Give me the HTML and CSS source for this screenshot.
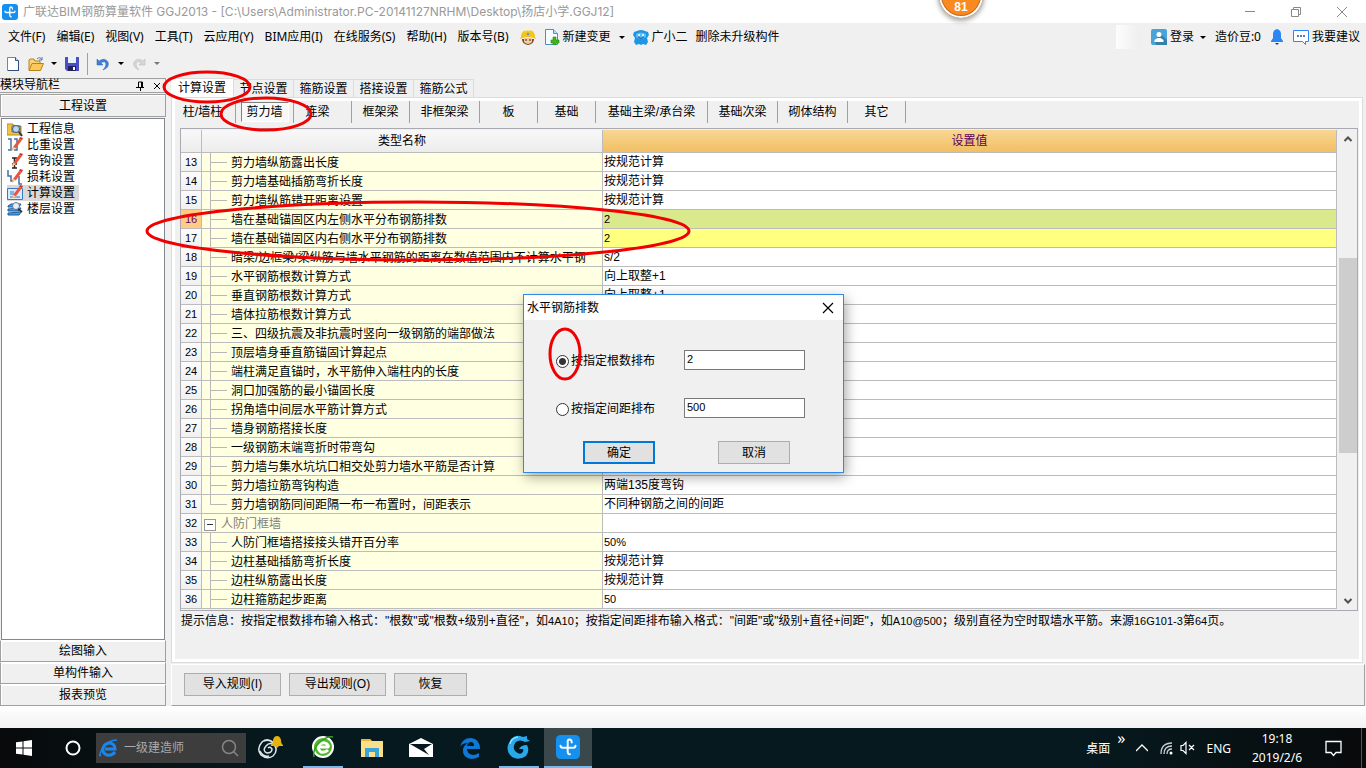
FILE: index.html
```html
<!DOCTYPE html>
<html lang="zh-CN">
<head>
<meta charset="utf-8">
<title>广联达BIM钢筋算量软件 GGJ2013</title>
<link rel="stylesheet" href="styles.css">
</head>
<body>
<svg class="defs" width="0" height="0" aria-hidden="true">
  <symbol id="pencil" viewBox="0 0 16 16"><path d="M6 10 12 2l3 1-6 8-4 2z" fill="#e8553a"/><path d="M12 2l1-2 3 1-1 2z" fill="#c33"/><path d="M6 10l3 1-4 3z" fill="#f3d3a0"/></symbol>
  <symbol id="brand" viewBox="0 0 16 16"><rect width="16" height="16" rx="3" fill="#1490f0"/><path d="M10.500 5Q10.500 3 9 3T7.800 5V11Q7.800 13 9.300 12.800M3 7.200Q3 8.500 4.500 8.500H11.500Q13 8.500 13 7.200" fill="none" stroke="#fff" stroke-width="1.300" stroke-linecap="round"/></symbol>
</svg>

<header class="titlebar">
  <svg class="i16"><use href="#brand"/></svg>
  <h1 class="title">广联达BIM钢筋算量软件 GGJ2013 - [C:\Users\Administrator.PC-20141127NRHM\Desktop\扬店小学.GGJ12]</h1>
  <div class="winbtns">
    <button aria-label="最小化"><svg width="12" height="12"><path d="M1 5.500h10" stroke="#888"/></svg></button>
    <button aria-label="还原"><svg width="12" height="12"><path d="M1.500 3.500h7v7h-7zM3.500 3V1.500h7v7H9" fill="none" stroke="#888"/></svg></button>
    <button aria-label="关闭"><svg width="12" height="12"><path d="M1 1l10 10M11 1L1 11" stroke="#888"/></svg></button>
  </div>
</header>

<nav class="menubar">
  <button>文件(F)</button><button>编辑(E)</button><button>视图(V)</button><button>工具(T)</button><button>云应用(Y)</button><button>BIM应用(I)</button><button>在线服务(S)</button><button>帮助(H)</button><button>版本号(B)</button>
  <div class="extras">
  <button aria-label="客服"><svg class="i16" viewBox="0 0 16 16"><path d="M2 10q0 5 6 6 6-1 6-6z" fill="#7a4320"/><path d="M4 9h8v4q-4 4-8 0z" fill="#f6c99a"/><path d="M6 10v2M10 10v2" stroke="#333"/><path d="M1 8Q1 1 8 1t7 7l1 2q-8-4-16 0z" fill="#f3c51e"/><path d="M5 2q3-2 5 0" stroke="#fff3a0" fill="none"/><circle cx="8" cy="5" r="1.300" fill="#5a9be0"/></svg></button>
  <button><svg class="i16" viewBox="0 0 16 16"><path d="M1.500.5h8l4 4v11h-12z" fill="#f5fbff" stroke="#4a90c8"/><path d="M9.500.5v4h4" fill="#bfe0f7" stroke="#4a90c8"/><path d="M9 8h3v3h3v3h-3v2H9v-2H7v-3h2z" fill="#3fb618" stroke="#278a0c" stroke-width=".6"/></svg>新建变更<i class="caret"></i></button>
  <button><svg class="i16" viewBox="0 0 16 16"><path d="M1 3l3-1q4-2 8 0l3 1 1 3-2 3 1 4-2 3-3-1-2 1-2-1-3 1-2-3 1-4-2-3z" fill="#1e96e8"/><path d="M3 5q5-3 10 0v3q-5 4-10 0z" fill="#5bbcf5"/><circle cx="6" cy="6" r="1" fill="#fff"/><circle cx="10" cy="6" r="1" fill="#fff"/><path d="M5 8q3 3 6 0" stroke="#0b5ca8" fill="none"/></svg>广小二</button>
  <button>删除未升级构件</button>
  </div>
  <span class="ghost"></span>
  <div class="account">
    <button><svg class="i16" viewBox="0 0 16 16"><rect width="16" height="16" rx="2" fill="#4aa3d8"/><path d="M9 4l7 7v5H5l-1-4z" fill="#367fa9"/><circle cx="8" cy="5.500" r="2.500" fill="#fff"/><path d="M3.500 13v-2l3-2h3l3 2v2z" fill="#fff"/></svg>登录<i class="caret"></i></button>
    <span>造价豆:0</span>
    <button aria-label="通知"><svg width="14" height="16" viewBox="0 0 14 16"><path d="M7 0q-4 1-4 5v4l-2 3v1h12v-1l-2-3V5q0-4-4-5z" fill="#2b86f5"/><path d="M5 14h4l-2 2z" fill="#123c8c"/></svg></button>
    <button><svg class="i16" viewBox="0 0 16 16"><path d="M.5 1.500h15v11h-3v3l-3-3h-9z" fill="#fff" stroke="#2b86f5"/><path d="M4 7h8" stroke="#1d4fa0" stroke-width="1.500" stroke-dasharray="2 1"/></svg>我要建议</button>
  </div>
</nav>

<div class="toolbar">
  <button aria-label="新建"><svg class="i16" viewBox="0 0 16 16"><path d="M2.500 1.500h8l3 3v10h-11z" fill="#fff" stroke="#6d87a8"/><path d="M10.500 1.500v3h3" fill="#cfe0f2" stroke="#2e4f7d"/><path d="M13.500 5v10M3 14.500h11" stroke="#2e4f7d"/></svg></button>
  <button aria-label="打开"><svg class="i16" viewBox="0 0 16 16"><path d="M1 14V4l1-1h4l1 2h5v3" fill="#f7d375" stroke="#b8811c"/><path d="M1 14.500L4 7.500h11.500l-3 7z" fill="#fbc95a" stroke="#b8811c"/><path d="M9 3q3-3 5 1m0-3v3h-3" fill="none" stroke="#4b7cb5"/></svg><i class="caret"></i></button>
  <button aria-label="保存"><svg class="i16" viewBox="0 0 16 16"><path d="M1 1h14v14H3l-2-2z" fill="#4a4fc4"/><path d="M4 1h8v6H4z" fill="#e8f2ff"/><path d="M4 10h8v5H4z" fill="#1e2060"/><path d="M9 11h2v3H9z" fill="#fff"/></svg></button>
  <span class="bar"></span>
  <button aria-label="撤销"><svg class="i16" viewBox="0 0 16 16"><path d="M2 3v6h6L6 7q4-3 5 1 0 3-3 6 7-3 5-8-3-5-9-1z" fill="#3f7fd8" stroke="#2a5db0" stroke-width=".5"/></svg><i class="caret"></i></button>
  <button class="dim" aria-label="恢复"><svg class="i16" viewBox="0 0 16 16"><path d="M14 3v6H8l2-2Q6 4 5 8q0 3 3 6-7-3-5-8 3-5 9-1z" fill="#d6d6d6" stroke="#bbb" stroke-width=".5"/></svg><i class="caret"></i></button>
</div>

<div class="work">
  <aside class="side">
    <div class="sidehead"><h2>模块导航栏</h2>
      <button aria-label="固定"><svg width="10" height="10"><path d="M3.500 6V1h4v5M6.500 1v5M1 6.500h8M5.500 7v3" fill="none" stroke="#000"/></svg></button>
      <button aria-label="关闭"><svg width="8" height="8"><path d="M1 1l6 6M7 1L1 7" stroke="#000"/></svg></button></div>
    <button class="nav">工程设置</button>
    <ul class="tree">
      <li><a href="#"><svg class="i16" viewBox="0 0 16 16"><path d="M0 3h6l1 2h7v9H0z" fill="#f0c544" stroke="#c08a10"/><path d="M5 5h8v6H5z" fill="#f3f7ff" stroke="#567"/><circle cx="9" cy="8" r="3.500" fill="#b7d9f7" stroke="#456"/><path d="M12 11l3 4" stroke="#333" stroke-width="2"/></svg>工程信息</a></li>
      <li><a href="#"><svg class="i16" viewBox="0 0 16 16"><path d="M1 2h3v11H1M7 2h3v11H7" fill="none" stroke="#47709f" stroke-width="1.500"/><use href="#pencil"/></svg>比重设置</a></li>
      <li><a href="#"><svg class="i16" viewBox="0 0 16 16"><path d="M5 5h5M7.500 5v10M5 15h5M5 11h5" fill="none" stroke="#222" stroke-width="1.500"/><use href="#pencil"/></svg>弯钩设置</a></li>
      <li><a href="#"><svg class="i16" viewBox="0 0 16 16"><path d="M1 1v6h3v5h3M12 7v8h3" fill="none" stroke="#47709f" stroke-width="1.500"/><use href="#pencil"/></svg>损耗设置</a></li>
      <li><a href="#" class="on"><svg class="i16" viewBox="0 0 16 16"><path d="M.5 3.500h15v11H.5z" fill="#d7eaff" stroke="#3c78c0"/><path d="M3 7h4M3 9h4M3 12h10" stroke="#3c78c0"/><use href="#pencil"/></svg>计算设置</a></li>
      <li><a href="#"><svg class="i16" viewBox="0 0 16 16"><path d="M1 5l3-2h10l-2 3H1zM1 8l13-1-2 3H1zM1 12l13-1-2 3H1z" fill="#4d9ce0" stroke="#1d5c9c"/><circle cx="9" cy="5" r="3.500" fill="#e1f0fc" stroke="#678"/><path d="M11 8l4 3" stroke="#333" stroke-width="2"/></svg>楼层设置</a></li>
    </ul>
    <button class="nav">绘图输入</button><button class="nav">单构件输入</button><button class="nav">报表预览</button>
  </aside>

  <main class="main">
    <div class="tabs"><button class="on">计算设置</button><button>节点设置</button><button>箍筋设置</button><button>搭接设置</button><button>箍筋公式</button></div>
    <section class="panel">
      <div class="subtabs"><button class="first">柱/墙柱</button><button class="on"><span>剪力墙</span></button><button class="near">连梁</button><button>框架梁</button><button class="mid">非框架梁</button><button>板</button><button>基础</button><button class="long">基础主梁/承台梁</button><button class="mid">基础次梁</button><button class="mid">砌体结构</button><button>其它</button></div>
      <div class="gridbox">
        <table>
          <colgroup><col class="cno"><col class="cname"><col></colgroup>
          <thead><tr><th></th><th>类型名称</th><th class="gold">设置值</th></tr></thead>
          <tbody>
            <tr><th>13</th><td>剪力墙纵筋露出长度</td><td>按规范计算</td></tr>
            <tr><th>14</th><td>剪力墙基础插筋弯折长度</td><td>按规范计算</td></tr>
            <tr><th>15</th><td>剪力墙纵筋错开距离设置</td><td>按规范计算</td></tr>
            <tr class="cur"><th>16</th><td>墙在基础锚固区内左侧水平分布钢筋排数</td><td class="num">2</td></tr>
            <tr class="hot"><th>17</th><td>墙在基础锚固区内右侧水平分布钢筋排数</td><td class="num">2</td></tr>
            <tr><th>18</th><td>暗梁/边框梁/梁纵筋与墙水平钢筋的距离在数值范围内不计算水平钢</td><td>s/2</td></tr>
            <tr><th>19</th><td>水平钢筋根数计算方式</td><td>向上取整+1</td></tr>
            <tr><th>20</th><td>垂直钢筋根数计算方式</td><td>向上取整+1</td></tr>
            <tr><th>21</th><td>墙体拉筋根数计算方式</td><td></td></tr>
            <tr><th>22</th><td>三、四级抗震及非抗震时竖向一级钢筋的端部做法</td><td></td></tr>
            <tr><th>23</th><td>顶层墙身垂直筋锚固计算起点</td><td></td></tr>
            <tr><th>24</th><td>端柱满足直锚时，水平筋伸入端柱内的长度</td><td></td></tr>
            <tr><th>25</th><td>洞口加强筋的最小锚固长度</td><td></td></tr>
            <tr><th>26</th><td>拐角墙中间层水平筋计算方式</td><td></td></tr>
            <tr><th>27</th><td>墙身钢筋搭接长度</td><td></td></tr>
            <tr><th>28</th><td>一级钢筋末端弯折时带弯勾</td><td></td></tr>
            <tr><th>29</th><td>剪力墙与集水坑坑口相交处剪力墙水平筋是否计算</td><td></td></tr>
            <tr><th>30</th><td>剪力墙拉筋弯钩构造</td><td>两端135度弯钩</td></tr>
            <tr class="last"><th>31</th><td>剪力墙钢筋同间距隔一布一布置时，间距表示</td><td>不同种钢筋之间的间距</td></tr>
            <tr class="group"><th>32</th><td><button aria-label="折叠"></button>人防门框墙</td><td></td></tr>
            <tr><th>33</th><td>人防门框墙搭接接头错开百分率</td><td class="num">50%</td></tr>
            <tr><th>34</th><td>边柱基础插筋弯折长度</td><td>按规范计算</td></tr>
            <tr><th>35</th><td>边柱纵筋露出长度</td><td>按规范计算</td></tr>
            <tr><th>36</th><td>边柱箍筋起步距离</td><td class="num">50</td></tr>
          </tbody>
        </table>
        <div class="scroll">
          <button aria-label="向上"><svg width="10" height="8"><path d="M1.500 6L5 2.500 8.500 6" fill="none" stroke="#505050" stroke-width="2"/></svg></button>
          <span class="gap1"></span><span class="thumb"></span><span class="gap2"></span>
          <button aria-label="向下"><svg width="10" height="8"><path d="M1.500 2L5 5.500 8.500 2" fill="none" stroke="#505050" stroke-width="2"/></svg></button>
        </div>
      </div>
      <p class="hint">提示信息：按指定根数排布输入格式："根数"或"根数+级别+直径"，如<code>4A10</code>；按指定间距排布输入格式："间距"或"级别+直径+间距"，如<code>A10@500</code>；级别直径为空时取墙水平筋。来源<code>16G101-3</code>第<code>64</code>页。</p>
    </section>
    <footer class="actions"><button class="btn wide">导入规则(I)</button><button class="btn wide">导出规则(O)</button><button class="btn">恢复</button></footer>
  </main>
</div>
<div class="blank"></div>

<footer class="taskbar">
  <button class="app" aria-label="开始"><svg width="16" height="16"><path d="M0 2.300L6.500 1.400V7.500H0zM7.500 1.200L16 0V7.500H7.500zM0 8.500H6.500V14.600L0 13.700zM7.500 8.500H16V16L7.500 14.800z" fill="#fff"/></svg></button>
  <button class="app" aria-label="助手"><svg width="16" height="16"><circle cx="8" cy="8" r="6.500" fill="none" stroke="#fff" stroke-width="2"/></svg></button>
  <div class="search">
    <svg width="20" height="20" viewBox="0 0 20 20"><path d="M16 14q-3 4-8 3-5-2-4-7 2-5 7-5 5 1 5 6H6" fill="none" stroke="#1a86ee" stroke-width="3"/><path d="M2 17Q-1 20 3 11 9 2 18 2" fill="none" stroke="#1a86ee" stroke-width="1.500"/></svg>
    <input aria-label="搜索" value="一级建造师">
    <svg width="18" height="18"><circle cx="8" cy="8" r="6.500" fill="none" stroke="#858585" stroke-width="1.500"/><path d="M12.500 12.500L17 17" stroke="#858585" stroke-width="1.500"/></svg>
  </div>
  <button class="app" aria-label="搜狗"><svg width="28" height="28" viewBox="0 0 28 28"><path d="M18 9Q12 3 6 8 0 15 5 21q6 5 12 1 5-5 2-10-5-5-9 0-4 5 1 7 5 0 5-4-2-3-4-1M4 17q3 6 9 5M8 7q5-2 9 2" fill="none" stroke="#dfe6e6" stroke-width="1.500"/><path d="M15 11q2-1 2-5 1-4 4-4 3 0 4 4 0 4 2 5v1H15z" fill="#e8b20c"/><path d="M19 12h4l-2 2z" fill="#e8b20c"/></svg></button>
  <button class="app run gapl" aria-label="浏览器"><svg width="24" height="24" viewBox="0 0 24 24"><circle cx="12" cy="12" r="10" fill="#4fb52a" stroke="#fff" stroke-width="2"/><path d="M17 15q-3 3-7 2-4-3-2-7 4-4 8-1 2 2 1 3H8" fill="none" stroke="#fff" stroke-width="3"/><path d="M3 22Q1 14 10 6q7-5 12-4" fill="none" stroke="#35a01a" stroke-width="1.500"/></svg></button>
  <button class="app" aria-label="资源管理器"><svg width="22" height="20" viewBox="0 0 22 20"><path d="M0 1h9l2 2h11v16H0z" fill="#fbe08c"/><path d="M0 1h9l1 2H0z" fill="#f0b429"/><path d="M4 19v-9h14v9h-4v-5H8v5z" fill="#38a4dc"/></svg></button>
  <button class="app" aria-label="邮件"><svg width="24" height="20" viewBox="0 0 24 20"><path d="M0 6l12-6 12 6v13H0z" fill="#fff"/><path d="M1 6h22l-8 5 5 6L1 6z" fill="#06181d"/></svg></button>
  <button class="app" aria-label="Edge"><svg width="22" height="22" viewBox="0 0 22 22"><path d="M1 10Q3 1 12 1q9 1 9 11H8q0 5 6 6 3 0 6-2v4q-4 2-8 2-9-2-8-10 1-4 5-6-6 0-8 4zM8 9h7q0-4-3-4-3 0-4 4z" fill="#0d78d6" fill-rule="evenodd"/></svg></button>
  <button class="app run" aria-label="广联达"><svg width="24" height="24" viewBox="0 0 24 24"><path d="M4 4q4-4 9-3l3 1 4-1v3l3 2-5 1q-5-3-9 0-4 4-1 9 4 4 7 2 2-2 1-4h-4q2-4 8-4 3 6-1 11-7 5-14 1-6-5-4-12z" fill="#29a8ec"/><path d="M3 9q1-6 8-7" stroke="#8ee1ff" stroke-width="1.500" fill="none"/></svg></button>
  <button class="app run now" aria-label="GGJ2013"><svg width="24" height="24"><use href="#brand"/></svg></button>
  <div class="tray">
    <button>桌面</button><button class="more">»</button>
    <svg width="12" height="8"><path d="M0 7l6-6 6 6" fill="none" stroke="#fff" stroke-width="1.300"/></svg>
    <svg class="wifi" width="13" height="13"><path d="M1 12Q1 1 12 1M4 12q0-8 8-8M7 12q0-5 5-5" fill="none" stroke="#c9cfd0" stroke-width="1.300"/><circle cx="11" cy="11" r="1.500" fill="#fff"/></svg>
    <svg width="15" height="14"><path d="M1 4.500h2l3-3v11l-3-3H1zM9 4l5 5M14 4L9 9" fill="none" stroke="#fff" stroke-width="1.200"/></svg>
    <button class="lang">ENG</button>
    <time class="clock"><span>19:18</span><span>2019/2/6</span></time>
    <button class="note" aria-label="通知中心"><svg width="17" height="17"><path d="M1 1.500h15v11h-5l-2.500 3-2.500-3H1z" fill="none" stroke="#fff" stroke-width="1.300"/></svg></button>
    <span class="peek"></span>
  </div>
</footer>

<div class="dialog" role="dialog" aria-label="水平钢筋排数">
  <div class="dtitle"><h2>水平钢筋排数</h2><button aria-label="关闭"><svg width="12" height="12"><path d="M1 1l10 10M11 1L1 11" stroke="#000" stroke-width="1.200"/></svg></button></div>
  <form class="dform">
    <div class="drow"><label><input type="radio" name="m" checked>按指定根数排布</label><input type="text" aria-label="根数" value="2"></div>
    <div class="drow"><label><input type="radio" name="m">按指定间距排布</label><input type="text" aria-label="间距" value="500"></div>
    <div class="dbtns"><button type="button" class="btn default">确定</button><button type="button" class="btn">取消</button></div>
  </form>
</div>
<div class="badge">81</div>
<svg class="marks" width="700" height="400" aria-hidden="true">
  <g fill="none" stroke="#f00000" stroke-width="3"><ellipse cx="207" cy="87" rx="43" ry="15"/><ellipse cx="266" cy="114" rx="45" ry="16"/><ellipse cx="418" cy="231" rx="271" ry="29"/><ellipse cx="565" cy="354" rx="15" ry="25"/></g>
</svg>
</body>
</html>
```
FILE: styles.css
```css
* { box-sizing: border-box; }
body {
  margin: 0; min-height: 100vh; display: flex; flex-direction: column; overflow: hidden;
  background: #fff; color: #000;
  font: 12px/16px "Liberation Sans", "Noto Sans CJK SC", sans-serif;
}
button { font: inherit; color: inherit; background: none; border: 0; padding: 0; white-space: nowrap; }
h1, h2, p, ul { margin: 0; padding: 0; font: inherit; }
svg { display: block; flex: none; }
.defs { position: absolute; }
.i16 { width: 16px; height: 16px; }
.caret { border: 3px solid transparent; border-top-color: #000; border-bottom: 0; }

.titlebar { height: 23px; display: flex; align-items: center; gap: 5px; padding: 0 18px 0 2px; background: #fff; }
.title { flex: 1; font: 12px/20px Inter, "Noto Sans CJK SC", sans-serif; color: #999; white-space: nowrap; }
.winbtns { display: flex; gap: 34px; }

.menubar { height: 28px; display: flex; align-items: center; gap: 11px; padding: 0 6px 0 8px; background: #f0f0f0; font-family: "Noto Sans", "Noto Sans CJK SC", sans-serif; white-space: nowrap; }
.menubar button { display: flex; align-items: center; gap: 3px; }
.menubar .caret { margin-left: 5px; }
.extras { display: flex; align-items: center; gap: 8px; }
.ghost { width: 24px; height: 24px; margin-left: auto; background: linear-gradient(90deg, #fdfdfd, #eee); }
.account { display: flex; align-items: center; gap: 9px; }
.account .caret { margin-left: 3px; }

.toolbar { height: 27px; display: flex; align-items: center; gap: 7px; padding: 0 5px 2px; background: #f0f0f0; }
.toolbar button { display: flex; align-items: center; gap: 7px; }
.bar { width: 1px; height: 22px; background: #a0a0a0; }
.dim .caret { border-top-color: #777; }

.work { flex: 1; display: flex; background: #f0f0f0; }
.side { width: 166px; flex: none; display: flex; flex-direction: column; }
.sidehead { height: 15px; display: flex; align-items: center; gap: 8px; padding: 0 4px 0 0; border: 1px solid #a0a0a0; border-left: 0; line-height: 13px; }
.sidehead h2 { flex: 1; }
.nav { height: 22px; flex: none; border: 1px solid #a0a0a0; border-top-color: #fff; box-shadow: inset 1px 1px #fff; }
.sidehead + .nav { margin-top: 1px; border-top-color: #a0a0a0; height: 23px; }
.tree { flex: 1; list-style: none; margin: 1px 1px 0 1px; padding: 2px 5px; background: #fff; border: 1px solid #828790; }
.tree a { display: inline-flex; gap: 4px; height: 16px; padding-right: 4px; color: #000; text-decoration: none; vertical-align: top; }
.tree li { height: 16px; }
.tree .on { background: #d9d9d9; }

.main { flex: 1; min-width: 0; display: flex; flex-direction: column; padding: 0 1px 0 5px; }
.tabs { height: 19px; flex: none; display: flex; align-items: flex-end; }
.tabs button { width: 60px; height: 18px; border: 1px solid #dcdcdc; border-left: 0; border-bottom: 0; }
.tabs .on { width: 63px; height: 19px; background: #fff; }
.panel { flex: 1; display: flex; flex-direction: column; margin-right: 2px; border: 1px solid #dcdcdc; outline: 3px solid #fff; outline-offset: -4px; padding: 3px 4px 3px 8px; }
.subtabs { display: flex; height: 22px; margin-left: -2px; }
.subtabs button { width: 58px; border-right: 1px solid #a0a0a0; }
.subtabs button.first { padding-right: 8px; }
.subtabs button.near { padding-right: 10px; }
.subtabs button.mid { width: 70px; }
.subtabs button.long { width: 112px; }
.subtabs .on span { display: block; width: 48px; height: 20px; margin: 1px auto; line-height: 18px; border: 1px solid; border-color: #808080 #fff #fff #808080; background: #f8f8f8; }
.gridbox { height: 483px; display: flex; gap: 2px; margin-top: 5px; padding: 1px 0; border: 1px solid #a9a9b2; }
table { flex: 1; border-spacing: 0; table-layout: fixed; height: 479px; }
.cno { width: 21px; }
.cname { width: 401px; }
th, td { height: 19px; padding: 0 1px; font-weight: normal; line-height: 16px; border: solid #bcbcbc; border-width: 0 1px 1px 0; white-space: nowrap; overflow: hidden; text-align: left; }
thead th { height: 23px; text-align: center; background: linear-gradient(#f8f8f8, #ececec); }
thead .gold { background: linear-gradient(#f8d695, #f2bf62); color: #600060; }
tbody th { font-size: 11px; text-align: center; background: linear-gradient(#fcfcfc, #f0f0f0); }
td { background: #fff; }
.num { font-size: 11px; }
td:nth-child(2) {
  padding-top: 2px; padding-left: 29px;
  background: linear-gradient(#b8b8b8, #b8b8b8) 8px 0 / 1px 100% no-repeat, linear-gradient(#b8b8b8, #b8b8b8) 9px 9px / 16px 1px no-repeat, #ffffe1;
}
.last td:nth-child(2) { background-size: 1px 10px, 16px 1px, auto; }
.group td:nth-child(2) { padding-left: 2px; background: #ffffe1; color: #808080; }
.group button { display: inline-block; width: 12px; height: 12px; margin-right: 5px; vertical-align: middle; border: 1px solid #999; background: linear-gradient(#333, #333) center / 6px 1px no-repeat, #fff; }
.cur th { background: #ffcc85; color: #600060; }
.cur td:last-child { background: #dae98c; }
.hot td:last-child { background: #ffff80; }
.scroll { width: 18px; display: flex; flex-direction: column; background: #f0f0f0; }
.scroll button { height: 17px; flex: none; display: flex; align-items: center; justify-content: center; }
.thumb { flex: 195; background: #cdcdcd; }
.gap1 { flex: 111; }
.gap2 { flex: 139; }
.hint { margin: 2px 0 0 1px; white-space: nowrap; }
.hint code { font: 11px/16px "Liberation Sans", sans-serif; }
.actions { height: 42px; flex: none; display: flex; gap: 8px; align-items: center; padding: 0 12px 2px; margin-top: 1px; border: 1px solid; border-color: #fff #a0a0a0 #a0a0a0 #fff; }
.btn { width: 73px; height: 23px; background: #e1e1e1; border: 1px solid #adadad; }
.wide { width: 97px; }
.blank { height: 22px; background: linear-gradient(#fff, #f2f2f2); }

.taskbar { height: 40px; display: flex; background: linear-gradient(90deg, #080a0b, #06191e 20%, #06191e 80%, #080a0b); color: #fff; }
.app { width: 48px; height: 40px; display: flex; align-items: center; justify-content: center; margin-right: 1px; }
.run { width: 40px; margin: 0 5px 0 4px; border-bottom: 2px solid #76b9ed; }
.now { width: 48px; margin: 0; background: #3a484c; }
.gapl { margin-left: 8px; }
.search { width: 150px; height: 30px; display: flex; align-items: center; gap: 5px; margin: 5px 0 0 -2px; padding: 0 7px 0 3px; background: #3d3d3d; }
.search input { flex: 1; min-width: 0; border: 0; padding: 0; background: none; color: #aaa; font: inherit; }
.tray { margin-left: auto; display: flex; align-items: center; gap: 7px; font: 12px/19px "Noto Sans", "Noto Sans CJK SC", sans-serif; }
.more { font-size: 16px; height: 40px; padding-bottom: 20px; }
.more + svg { margin-left: 4px; }
.wifi { margin-left: 5px; }
.lang { margin: 0 6px 0 4px; }
.clock { width: 66px; display: flex; flex-direction: column; align-items: center; }
.note { margin: 0 12px 0 8px; }
.peek { width: 5px; height: 40px; border-left: 1px solid #555; }

.dialog { position: absolute; left: 523px; top: 294px; width: 321px; background: #f0f0f0; border: 1px solid #2f8ae5; box-shadow: 2px 4px 12px rgba(0, 0, 0, .35); }
.dtitle { height: 25px; display: flex; align-items: center; justify-content: space-between; padding: 0 9px 0 3px; background: #fff; }
.dform { padding: 28px 38px 8px 32px; }
.drow { height: 24px; margin-bottom: 24px; display: flex; align-items: center; justify-content: space-between; }
.drow label { display: flex; align-items: center; gap: 2px; padding-top: 2px; }
.drow [type="radio"] { appearance: none; width: 13px; height: 13px; margin: 0; border: 1px solid #333; border-radius: 50%; background: #fff; }
.drow [type="radio"]:checked { background: radial-gradient(circle, #333 0 3px, #fff 4px); }
.drow [type="text"] { width: 121px; height: 20px; padding: 0 2px 2px; border: 1px solid #7a7a7a; background: #fff; font: inherit; font-size: 11px; }
.dbtns { display: flex; justify-content: space-between; padding: 0 15px 0 27px; margin-top: -3px; }
.dbtns .btn { width: 72px; }
.default { border: 2px solid #0078d7; }

.badge { position: absolute; left: 938px; top: -28px; width: 46px; height: 47px; padding-top: 26px; border-radius: 50%; border: 1px solid #bbb; box-shadow: inset 0 0 0 2px #fff, inset 0 0 0 3px #c9661a, 0 2px 5px rgba(0, 0, 0, .35); background: #f98a1f; color: #fff; text-align: center; font-weight: bold; }
.marks { position: absolute; left: 0; top: 0; pointer-events: none; }
```
